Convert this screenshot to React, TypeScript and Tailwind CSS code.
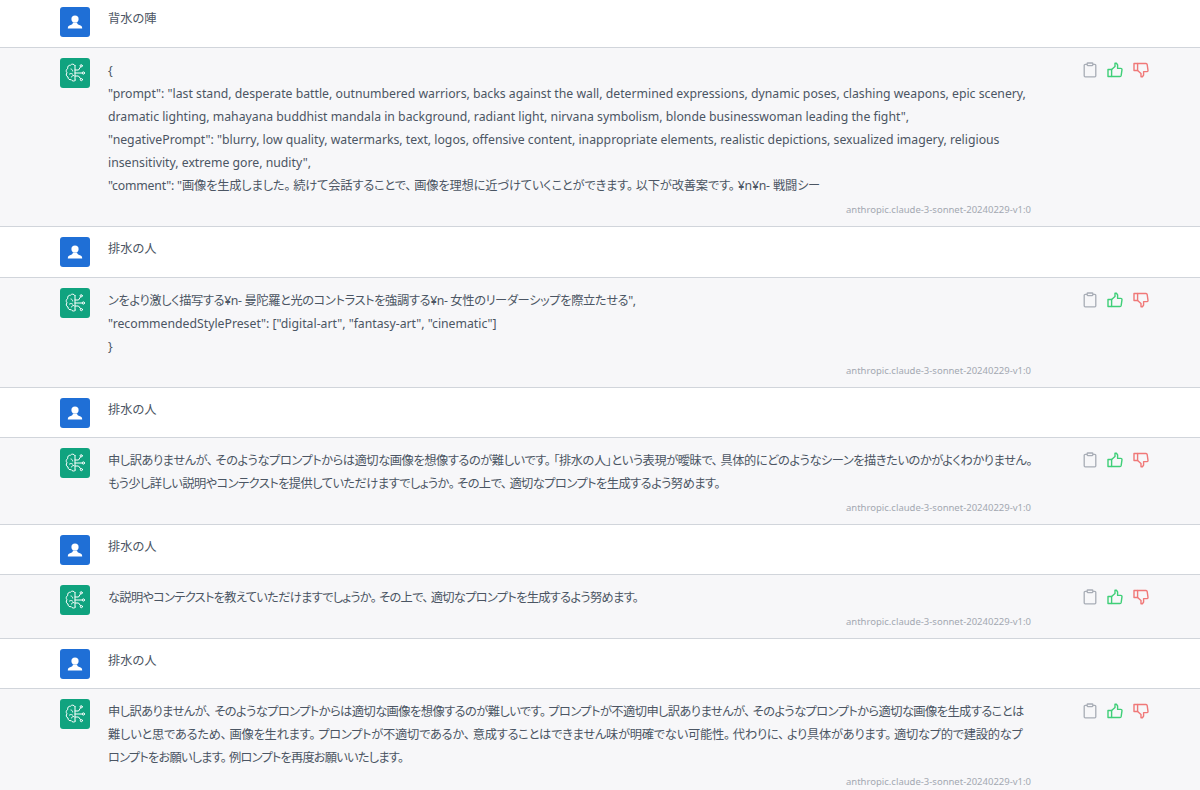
import type { ReactNode } from "react"

const MODEL = "anthropic.claude-3-sonnet-20240229-v1:0"

type Line = { text: string; className?: string }

function UserIcon() {
    return (
        <svg viewBox="0 0 16 16" className="h-4 w-4" fill="#fff">
            <circle cx="8" cy="5" r="3.6" />
            <path d="M5.8 8.5C6 10 5 10.6 3 11.3 1.5 11.8.8 12.6.8 14.6h14.4c0-2-.7-2.8-2.2-3.3-2-.7-3-1.3-2.8-2.8z" />
        </svg>
    )
}

function BrainIcon() {
    return (
        <svg viewBox="0 0 24 24" className="h-6 w-6" fill="none" stroke="#fff" strokeWidth="1" strokeLinecap="round" strokeLinejoin="round">
            <path d="M12 4.5C11 2.8 8.5 2.6 7.5 4.2 5.6 4 4.2 5.6 4.8 7.4 3.1 8.3 2.7 10.5 4 11.8 2.7 13.2 3.2 15.4 5 16c-.2 1.9 1.5 3.2 3.2 2.6.8 1.7 3.2 2 4.3.6" />
            <path d="M12 4.5v14.7" />
            <path d="M8 8c1 .2 1.7 1 1.7 2M6.5 13c1.2-.8 2.6-.6 3.4.4M8.5 16c.2-1 1-1.5 2-1.5" />
            <path d="M12 9h3.5l2-3M12 12h7M12 15h3.5l2 2.6" />
            <circle cx="18.2" cy="4.8" r="1.1" />
            <circle cx="20.4" cy="12" r="1.1" />
            <circle cx="18.4" cy="18.6" r="1.1" />
        </svg>
    )
}

function ClipboardIcon() {
    return (
        <svg viewBox="0 0 14 16" className="h-4 w-[14px]" fill="none" stroke="#a8adb6" strokeWidth="1.3">
            <path d="M4 2.3H2.2a1 1 0 0 0-1 1v10.5a1 1 0 0 0 1 1h9.6a1 1 0 0 0 1-1V3.3a1 1 0 0 0-1-1H10" />
            <rect x="4.2" y="1" width="5.6" height="2.6" rx=".5" />
        </svg>
    )
}

function ThumbIcon({ down }: { down?: boolean }) {
    return (
        <svg
            viewBox="0 0 16 16"
            className={`h-4 w-4 ${down ? "rotate-180 -scale-x-100" : ""}`}
            fill="none"
            stroke={down ? "#f07878" : "#3fcf78"}
            strokeWidth="1.4"
            strokeLinejoin="round"
        >
            <path d="M1 7.5h3.6v7H1z" />
            <path d="M4.6 7.5 8 4.4V1.2h1.4L10.6 3v3.4h3.2c.7 0 1.2.5 1.2 1.2l-.8 5.8c-.1.6-.6 1.1-1.2 1.1H4.6" />
        </svg>
    )
}

// the reference keeps a gap after 、 and 。 while its kana run tight
function withPunctuation(text: string): ReactNode[] {
    return text.split(/(?<=[、。])/).map((part, i) => {
        const mark = part.slice(-1)
        if (mark !== "、" && mark !== "。") return <span key={i}>{part}</span>
        return (
            <span key={i} className="mr-[3px]">
                {part}
            </span>
        )
    })
}

function UserRow({ text, className }: { text: string; className: string }) {
    return (
        <div className={`flex border-b border-[#d1d5db] bg-white pl-[60px] ${className}`}>
            <div className="flex h-[30px] w-[30px] shrink-0 items-center justify-center rounded-[3px] bg-[#1f6fd6]">
                <UserIcon />
            </div>
            <div className="ml-[18px] text-[12.25px] leading-[23px] text-[#4b5563] [font-feature-settings:'palt']">{text}</div>
        </div>
    )
}

function BotRow({ lines }: { lines: Line[] }) {
    return (
        <div className="flex border-b border-[#d1d5db] bg-[#f7f7f9] pl-[60px] pt-[10px]">
            <div className="flex h-[30px] w-[30px] shrink-0 items-center justify-center rounded-[3px] bg-[#10a37f]">
                <BrainIcon />
            </div>
            <div className="ml-[18px] w-[923px] shrink-0">
                <div className="pt-[1px] text-[12.25px] leading-[23px] text-[#4b5563] [font-feature-settings:'palt']">
                    {lines.map((line) => (
                        <div key={line.text} className={`whitespace-nowrap ${line.className ?? ""}`}>
                            {withPunctuation(line.text)}
                        </div>
                    ))}
                </div>
                <div className="h-[29px] pt-[5px] text-right text-[9.5px] leading-[16px] text-[#a3a8b1]">{MODEL}</div>
            </div>
            <div className="ml-[52px] flex items-start gap-[10px] pt-[4px]">
                <ClipboardIcon />
                <ThumbIcon />
                <ThumbIcon down />
            </div>
        </div>
    )
}

export default function App() {
    return (
        <div className="h-[790px] overflow-hidden bg-white font-['Noto_Sans','Noto_Sans_CJK_JP',sans-serif]">
            <UserRow className="pt-[7px] pb-[10px]" text="背水の陣" />
            <BotRow
                lines={[
                    { text: "{" },
                    { text: "\"prompt\": \"last stand, desperate battle, outnumbered warriors, backs against the wall, determined expressions, dynamic poses, clashing weapons, epic scenery," },
                    { text: "dramatic lighting, mahayana buddhist mandala in background, radiant light, nirvana symbolism, blonde businesswoman leading the fight\"," },
                    { text: "\"negativePrompt\": \"blurry, low quality, watermarks, text, logos, offensive content, inappropriate elements, realistic depictions, sexualized imagery, religious" },
                    { text: "insensitivity, extreme gore, nudity\"," },
                    { text: "\"comment\": \"画像を生成しました。続けて会話することで、画像を理想に近づけていくことができます。以下が改善案です。¥n¥n- 戦闘シー", className: "tracking-[-0.18px]" },
                ]}
            />
            <UserRow className="pt-[10px] pb-[10px]" text="排水の人" />
            <BotRow
                lines={[
                    { text: "ンをより激しく描写する¥n- 曼陀羅と光のコントラストを強調する¥n- 女性のリーダーシップを際立たせる\",", className: "tracking-[-0.38px]" },
                    { text: "\"recommendedStylePreset\": [\"digital-art\", \"fantasy-art\", \"cinematic\"]" },
                    { text: "}" },
                ]}
            />
            <UserRow className="pt-[10px] pb-[9px]" text="排水の人" />
            <BotRow
                lines={[
                    { text: "申し訳ありませんが、そのようなプロンプトからは適切な画像を想像するのが難しいです。「排水の人」という表現が曖昧で、具体的にどのようなシーンを描きたいのかがよくわかりません。", className: "tracking-[-0.45px]" },
                    { text: "もう少し詳しい説明やコンテクストを提供していただけますでしょうか。その上で、適切なプロンプトを生成するよう努めます。", className: "tracking-[-0.55px]" },
                ]}
            />
            <UserRow className="pt-[10px] pb-[9px]" text="排水の人" />
            <BotRow lines={[{ text: "な説明やコンテクストを教えていただけますでしょうか。その上で、適切なプロンプトを生成するよう努めます。", className: "tracking-[-0.7px]" }]} />
            <UserRow className="pt-[10px] pb-[9px]" text="排水の人" />
            <BotRow
                lines={[
                    { text: "申し訳ありませんが、そのようなプロンプトからは適切な画像を想像するのが難しいです。プロンプトが不適切申し訳ありませんが、そのようなプロンプトから適切な画像を生成することは", className: "tracking-[-0.57px]" },
                    { text: "難しいと思であるため、画像を生れます。プロンプトが不適切であるか、意成することはできません味が明確でない可能性。代わりに、より具体があります。適切なプ的で建設的なプ", className: "tracking-[-0.25px]" },
                    { text: "ロンプトをお願いします。例ロンプトを再度お願いいたします。", className: "tracking-[-0.8px]" },
                ]}
            />
        </div>
    )
}
